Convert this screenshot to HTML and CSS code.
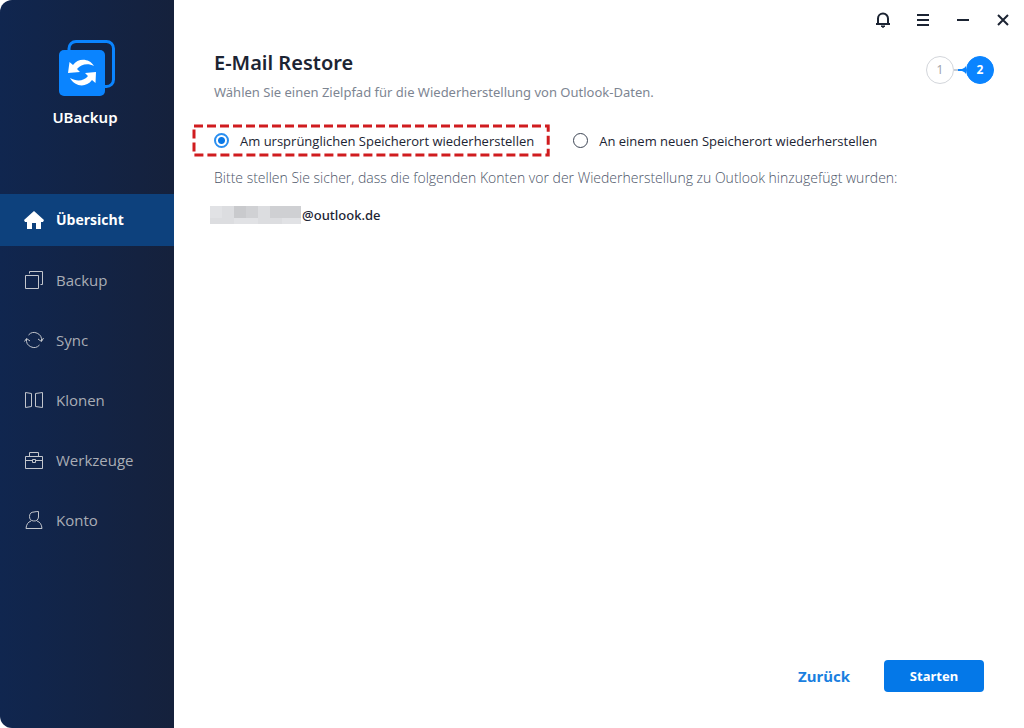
FILE: index.html
```
<!DOCTYPE html>
<html lang="de">

<head>
    <meta charset="UTF-8">
    <meta name="viewport" content="width=device-width, initial-scale=1.0">
    <title>UBackup</title>
    <link rel="stylesheet" href="styles.css">
</head>

<body>
    <div class="app">
        <aside class="sidebar">
            <div class="brand">
                <svg class="logo" viewBox="0 0 56 56">
                    <rect x="10" y="1.5" width="44.500" height="45" rx="7" fill="none" stroke="#0a84ff" stroke-width="3" />
                    <rect x="0" y="10" width="46" height="46" rx="5" fill="#0a84ff" />
                    <path d="M9 33 L10.500 22 L14 25 C19 18 30 18 35 26 C29 23 22 24 18 29 L21 32 Z" fill="#fff" />
                    <path d="M37 32 L36.500 43 L33 40 C27 48 16 47 11 38 C18 42 25 41 29 36 L26 33 Z" fill="#fff" />
                </svg>
                <div class="brand-name">UBackup</div>
            </div>
            <nav class="menu">
                <a href="#" class="item active">
                    <svg viewBox="0 0 20 20"><path d="M10 1 L0 10 L1 12 H3 V19 H8 V13 H12 V19 H17 V12 H19 L20 10 Z" fill="#fff" stroke="none" /></svg>
                    Übersicht
                </a>
                <a href="#" class="item">
                    <svg viewBox="0 0 20 20"><path d="M1.5 5.5 H14.5 V18.500 H1.5 Z M5.5 3.500 V1.5 H18.500 V14.500 H16.500" /></svg>
                    Backup
                </a>
                <a href="#" class="item">
                    <svg viewBox="0 0 20 20"><path d="M4.500 5 A7.500 7.500 0 0 1 17.500 11 M15.500 15 A7.500 7.500 0 0 1 2.500 9 M0.500 11.500 L2.500 8.500 L6 11 M14 9 L17.500 11.500 L19.500 8" /></svg>
                    Sync
                </a>
                <a href="#" class="item">
                    <svg viewBox="0 0 20 20"><path d="M1.5 2.500 L7.500 3.500 V16.500 L1.5 17.500 Z M18.500 2.500 L11.500 3.500 V16.500 L18.500 17.500 Z" /></svg>
                    Klonen
                </a>
                <a href="#" class="item">
                    <svg viewBox="0 0 20 20"><path d="M1.5 6.500 H18.500 V18.500 H1.5 Z M5.5 6.500 V2.500 H14.500 V6.500 M1.5 10.500 H8 M12 10.500 H18.500 M8.500 9.500 H11.500 V12.500 H8.500 Z" /></svg>
                    Werkzeuge
                </a>
                <a href="#" class="item">
                    <svg viewBox="0 0 20 20"><path d="M14.500 1.5 V7 A4.500 4.500 0 1 1 10 2 Q12 1.5 14.500 1.5 Z M7 11 Q2.500 12.500 2 18.500 H18 Q17.500 12.500 13 11" /></svg>
                    Konto
                </a>
            </nav>
        </aside>

        <main class="main">
            <div class="titlebar">
                <button aria-label="Benachrichtigungen">
                    <svg viewBox="0 0 16 16"><path d="M1 12 H15 M3 12 V6.500 A5 5 0 0 1 13 6.500 V12" /><path d="M6 14 H10 L8 15.500 Z" fill="#1c2433" stroke-width="1" /></svg>
                </button>
                <button aria-label="Menü">
                    <svg viewBox="0 0 16 16"><path d="M2 3 H14 M2 8 H14 M2 13 H14" /></svg>
                </button>
                <button aria-label="Minimieren">
                    <svg viewBox="0 0 16 16"><path d="M2 8 H14" /></svg>
                </button>
                <button aria-label="Schließen">
                    <svg viewBox="0 0 16 16"><path d="M3 3 L13 13 M13 3 L3 13" /></svg>
                </button>
            </div>

            <header class="header">
                <div>
                    <h1>E-Mail Restore</h1>
                    <p>Wählen Sie einen Zielpfad für die Wiederherstellung von Outlook-Daten.</p>
                </div>
                <div class="steps">
                    <span class="step">1</span>
                    <svg class="link" viewBox="0 0 12 12">
                        <path d="M0 6 H5" stroke="#c5ccd6" stroke-width="2" />
                        <path d="M4 5 H8 Q11 4 12 2 V10 Q11 8 8 7 H4 Z" fill="#0a84ff" />
                    </svg>
                    <span class="step current">2</span>
                </div>
            </header>

            <div class="options">
                <label class="option marked">
                    <svg class="frame"><rect width="100%" height="100%" /></svg>
                    <input type="radio" name="target" checked>
                    Am ursprünglichen Speicherort wiederherstellen
                </label>
                <label class="option">
                    <input type="radio" name="target">
                    An einem neuen Speicherort wiederherstellen
                </label>
            </div>

            <p class="hint">Bitte stellen Sie sicher, dass die folgenden Konten vor der Wiederherstellung zu Outlook hinzugefügt wurden:</p>

            <div class="account">
                <svg class="pixels" viewBox="0 0 91 18">
                    <rect width="91" height="18" fill="#dcdde0" />
                    <path d="M24 0 H48 V12 H24 Z" fill="#c9cacd" />
                    <path d="M60 0 H91 V12 H60 Z" fill="#cfd0d3" />
                    <path d="M36 0 H48 V12 H36 Z" fill="#d0d1d4" />
                    <path d="M0 0 H12 V12 H0 Z M24 12 H48 V18 H24 Z M72 12 H91 V18 H72 Z" fill="#e1e2e5" />
                </svg>
                <span>@outlook.de</span>
            </div>

            <footer class="actions">
                <button class="back">Zurück</button>
                <button class="start">Starten</button>
            </footer>
        </main>
    </div>
</body>

</html>
```
FILE: styles.css
```
* {
    box-sizing: border-box;
}

body {
    margin: 0;
    background: #fff;
    font-family: 'Noto Sans', 'Open Sans', sans-serif;
    font-size: 13px;
    color: #1c2433;
}

h1,
p {
    margin: 0;
}

button {
    padding: 0;
    border: none;
    background: none;
    font-family: inherit;
    cursor: pointer;
}

.app {
    display: flex;
    min-height: 100vh;
}

.sidebar {
    flex: 0 0 174px;
    padding-top: 40px;
    background: linear-gradient(90deg, #10264f, #15213c);
    border-radius: 12px 0 0 12px;
}

.brand {
    height: 154px;
    text-align: center;
    color: #fff;
}

.logo {
    display: block;
    width: 56px;
    height: 56px;
    margin: 0 auto 11px;
}

.brand-name {
    padding-right: 4px;
    font-size: 15px;
    font-weight: 600;
    line-height: 20px;
}

.menu {
    display: flex;
    flex-direction: column;
    gap: 8px;
}

.item {
    display: flex;
    align-items: center;
    gap: 12px;
    height: 52px;
    padding-left: 24px;
    font-family: 'Open Sans', 'Noto Sans', sans-serif;
    font-size: 15px;
    line-height: 18px;
    color: #a9adb5;
    text-decoration: none;
}

.item svg {
    width: 20px;
    height: 20px;
    fill: none;
    stroke: #c3c6cc;
}

.item.active {
    background: #0d417d;
    font-size: 14px;
    font-weight: bold;
    color: #fff;
}

.main {
    flex: 1;
    display: flex;
    flex-direction: column;
    min-width: 0;
    padding: 10px 30px 36px 40px;
}

.titlebar {
    display: flex;
    justify-content: flex-end;
    gap: 20px;
    margin-right: -19px;
}

.titlebar button {
    width: 20px;
    height: 20px;
}

.titlebar svg {
    display: block;
    width: 16px;
    height: 16px;
    margin: 2px;
    fill: none;
    stroke: #1c2433;
    stroke-width: 2;
}

.header {
    display: flex;
    justify-content: space-between;
    margin-top: 20px;
}

.header h1 {
    font-size: 20px;
    font-weight: 600;
    line-height: 26px;
}

.header p {
    margin-top: 6px;
    line-height: 20px;
    color: #7d8592;
}

.steps {
    display: flex;
    align-items: center;
    height: 28px;
    margin-top: 6px;
}

.step {
    width: 28px;
    height: 28px;
    border: 1px solid #d3d6db;
    border-radius: 50%;
    font-size: 12px;
    line-height: 26px;
    text-align: center;
    color: #a0a4ab;
}

.step.current {
    border-color: #0a84ff;
    background: #0a84ff;
    font-weight: bold;
    color: #fff;
}

.link {
    width: 12px;
    height: 12px;
}

.options {
    display: flex;
    gap: 23px;
    margin: 22px 0 0 -22px;
}

.option {
    position: relative;
    display: flex;
    align-items: center;
    gap: 11px;
    height: 33px;
    font-family: 'Open Sans', 'Noto Sans', sans-serif;
}

.option.marked {
    padding: 0 16px 0 22px;
}

/* red dashed highlight around the chosen option */
.frame {
    position: absolute;
    inset: 2px;
    width: calc(100% - 4px);
    height: calc(100% - 4px);
    overflow: visible;
    pointer-events: none;
}

.frame rect {
    fill: none;
    stroke: #d01c1f;
    stroke-width: 3;
    stroke-dasharray: 9 4;
}

.option input {
    appearance: none;
    width: 15px;
    height: 15px;
    margin: 0;
    border: 1px solid #3d4554;
    border-radius: 50%;
}

.option input:checked {
    border: 2px solid #2b8ff0;
    background: radial-gradient(circle, #0a78e6 3px, #fff 4px);
}

.hint {
    margin-top: 11px;
    font-family: 'Open Sans', 'Noto Sans', sans-serif;
    font-size: 14px;
    font-weight: 300;
    line-height: 20px;
    color: #4c5568;
}

.account {
    display: flex;
    align-items: center;
    gap: 1px;
    margin: 17px 0 0 -4px;
    line-height: 20px;
    font-weight: 500;
}

.pixels {
    width: 91px;
    height: 18px;
}

.actions {
    display: flex;
    justify-content: flex-end;
    gap: 34px;
    margin-top: auto;
    padding-right: 10px;
}

.actions button {
    height: 32px;
    font-weight: bold;
}

.back {
    font-size: 15px;
    color: #1a7fe0;
}

.start {
    width: 100px;
    border-radius: 4px;
    background: #0478e8;
    font-size: 13px;
    color: #fff;
}
```
